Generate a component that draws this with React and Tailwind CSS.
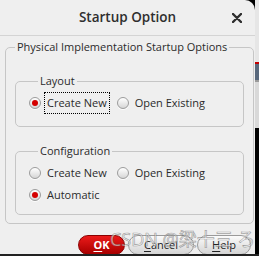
import React from 'react';

const Radio = ({ checked }) => (
  <span className="w-[12px] h-[12px] shrink-0 rounded-full border border-[#9c9c9c] bg-gradient-to-b from-[#ffffff] to-[#d6d6d6] flex items-center justify-center shadow-[0_1px_0_rgba(255,255,255,0.8)]">
    {checked && <span className="w-[6px] h-[6px] rounded-full bg-[#d40000]" />}
  </span>
);

const Option = ({ label, checked, focused }) => (
  <div className="flex items-center gap-[3px]">
    <Radio checked={checked} />
    <span
      className={`px-[2px] py-[2px] leading-[16px] border ${focused ? 'border-dotted border-black' : 'border-transparent'}`}
    >
      {label}
    </span>
  </div>
);

const Group = ({ title, children, className = '' }) => (
  <fieldset className={`border border-[#c6c6c6] rounded-[5px] ${className}`}>
    <legend className="ml-[9px] px-[2px] leading-[18px]">{title}</legend>
    {children}
  </fieldset>
);

const Button = ({ children, primary, className = '' }) => (
  <button
    className={`h-[20px] rounded-[10px] border text-[11px] leading-[18px] ${
      primary
        ? 'border-[#8a0000] bg-gradient-to-b from-[#ec1a1a] to-[#a80000] text-white font-bold'
        : 'border-[#9a9a9a] bg-gradient-to-b from-[#fbfbfb] to-[#d4d4d4] text-[#222]'
    } ${className}`}
  >
    {children}
  </button>
);

export default function App() {
  return (
    <div className="w-[259px] h-[256px] overflow-hidden flex flex-col bg-black font-['Open_Sans',sans-serif] text-[11px] text-[#2b2b2b]">
      <div className="h-[254px] flex">
        {/* dialog */}
        <div className="relative w-[255px] h-full bg-[#efefef] rounded-tr-[10px] overflow-hidden flex flex-col">
          <div className="h-[36px] shrink-0 border-b border-[#d4d4d4] flex items-center justify-center relative">
            <span className="text-[13.5px] font-semibold text-[#2e2e2e]">Startup Option</span>
            <svg className="absolute right-[13px] top-[13px]" width="10" height="10" viewBox="0 0 10 10">
              <path d="M1 1L9 9M9 1L1 9" stroke="#2e2e2e" strokeWidth="2.4" strokeLinecap="round" />
            </svg>
          </div>

          <div className="pl-[5px] pr-[1px] mt-[2px]">
            <fieldset className="border border-[#c6c6c6] rounded-[5px] px-[9px] pt-[16px] pb-[8px]">
              <legend className="ml-[0px] px-[2px] leading-[18px]">Physical Implementation Startup Options</legend>

              <Group title="Layout" className="pl-[13px] pt-[2px] pb-[12px]">
                <div className="flex items-center gap-[7px]">
                  <Option label="Create New" checked focused />
                  <Option label="Open Existing" />
                </div>
              </Group>

              <Group title="Configuration" className="mt-[15px] pl-[13px] pt-[2px] pb-[8px]">
                <div className="flex items-center gap-[7px]">
                  <Option label="Create New" />
                  <Option label="Open Existing" />
                </div>
                <Option label="Automatic" checked />
              </Group>
            </fieldset>
          </div>

          <div className="mt-[11px] flex justify-end gap-[3px] pr-[4px]">
            <Button primary className="w-[47px]">
              <span className="underline underline-offset-2">O</span>K
            </Button>
            <Button className="w-[66px]">
              <span className="underline underline-offset-2">C</span>ancel
            </Button>
            <Button className="w-[54px]">
              <span className="underline underline-offset-2">H</span>elp
            </Button>
          </div>

          {/* watermark */}
          <div className="absolute left-[110px] top-[228px] text-[18px] leading-[22px] text-white/60 [-webkit-text-stroke:0.7px_rgba(90,90,90,0.55)] whitespace-nowrap font-['Open_Sans','Noto_Sans_CJK_SC',sans-serif] pointer-events-none">
            CSDN @梁十三 ろ
          </div>
        </div>

        {/* window behind */}
        <div className="flex-1 flex flex-col">
          <div className="h-[62px] bg-[#e6e6e6]" />
          <div className="h-[2px] bg-[#c40000]" />
          <div className="h-[16px] bg-[#58687c]" />
          <div className="h-[2px] bg-[#9a9a9a]" />
          <div className="h-[46px] bg-[#d9d9d9]" />
          <div className="flex-1 bg-black" />
        </div>
      </div>
      <div className="h-[2px] bg-[#222]" />
    </div>
  );
}
